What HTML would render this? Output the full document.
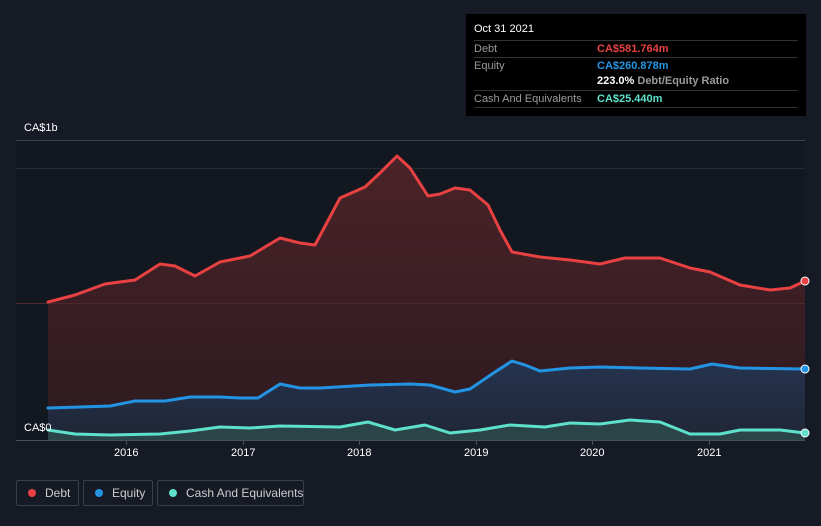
<!DOCTYPE html><html><head><style>
body{margin:0;width:821px;height:526px;background:#151a24;font-family:"Liberation Sans",sans-serif;overflow:hidden;position:relative}
.t{position:absolute;color:#fff;font-size:11px}
.tip{position:absolute;left:466px;top:14px;width:340px;height:102px;background:#000}
.row{position:absolute;left:8px;width:324px;border-top:1px solid #333;font-size:11px;color:#9a9a9a;height:17px;line-height:17px}
.row span{position:absolute;left:123px;font-weight:bold;white-space:nowrap}
.leg{position:absolute;top:480px;height:26px;border:1px solid #3a3f4a;border-radius:2px;color:#ccc;font-size:12px;line-height:24px;box-sizing:border-box;white-space:nowrap}
.leg i{position:absolute;left:11px;top:8px;width:8px;height:8px;border-radius:50%}
</style></head><body>
<svg width="821" height="526" style="position:absolute;left:0;top:0">
<defs>
<linearGradient id="dr" x1="0" y1="0" x2="0" y2="1"><stop offset="0" stop-color="#4a2328"/><stop offset="1" stop-color="#2c1a20"/></linearGradient>
<linearGradient id="eq" x1="0" y1="0" x2="0" y2="1"><stop offset="0" stop-color="#263450"/><stop offset="1" stop-color="#1f2535"/></linearGradient>
</defs>
<rect x="16" y="140" width="789" height="300" fill="#131820"/>
<line x1="16" y1="140.5" x2="805" y2="140.5" stroke="#3a3f48"/>
<line x1="16" y1="168.5" x2="805" y2="168.5" stroke="#262b34"/>
<polygon fill="url(#dr)" points="48,302 75,295 105,284 135,280 160,264 175,266 195,276 220,262 250,256 280,238 300,243 315,245 340,198 365,187 380,173 397,156 410,168 428,196 440,194 455,188 470,190 488,205 500,230 512,252 540,257 570,260 600,264 625,258 660,258 690,268 710,272 740,285 770,290 790,288 805,281 805,440 48,440"/>
<line x1="16" y1="303.5" x2="805" y2="303.5" stroke="#4a2a2f"/>
<polygon fill="url(#eq)" points="48,408 80,407 110,406 135,401 165,401 190,397 220,397 240,398 258,398 280,384 300,388 320,388 370,385 410,384 430,385 455,392 470,389 495,372 512,361 525,365 540,371 570,368 600,367 640,368 690,369 712,364 740,368 805,369 805,440 48,440"/>
<polygon fill="#2b4448" points="48,430 75,434 110,435 160,434 190,431 220,427 250,428 280,426 340,427 368,422 395,430 425,425 450,433 480,430 510,425 545,427 570,423 600,424 630,420 660,422 690,434 720,434 740,430 780,430 805,433 805,440 48,440"/>
<g fill="none" stroke-width="3" stroke-linejoin="round" stroke-linecap="round">
<polyline stroke="#e84142" points="48,302 75,295 105,284 135,280 160,264 175,266 195,276 220,262 250,256 280,238 300,243 315,245 340,198 365,187 380,173 397,156 410,168 428,196 440,194 455,188 470,190 488,205 500,230 512,252 540,257 570,260 600,264 625,258 660,258 690,268 710,272 740,285 770,290 790,288 805,281"/>
<polyline stroke="#2394e3" points="48,408 80,407 110,406 135,401 165,401 190,397 220,397 240,398 258,398 280,384 300,388 320,388 370,385 410,384 430,385 455,392 470,389 495,372 512,361 525,365 540,371 570,368 600,367 640,368 690,369 712,364 740,368 805,369"/>
<polyline stroke="#5de0cc" points="48,430 75,434 110,435 160,434 190,431 220,427 250,428 280,426 340,427 368,422 395,430 425,425 450,433 480,430 510,425 545,427 570,423 600,424 630,420 660,422 690,434 720,434 740,430 780,430 805,433"/>
</g>
<circle cx="805" cy="281" r="4" fill="#e84142" stroke="#fff"/>
<circle cx="805" cy="369" r="4" fill="#2394e3" stroke="#fff"/>
<circle cx="805" cy="433" r="4" fill="#5de0cc" stroke="#fff"/>
<line x1="16" y1="440.5" x2="805" y2="440.5" stroke="#4a4f58"/>
<g stroke="#4a4f58"><line x1="126.5" y1="441" x2="126.5" y2="445"/><line x1="243.5" y1="441" x2="243.5" y2="445"/><line x1="359.5" y1="441" x2="359.5" y2="445"/><line x1="476.5" y1="441" x2="476.5" y2="445"/><line x1="592.5" y1="441" x2="592.5" y2="445"/><line x1="709.5" y1="441" x2="709.5" y2="445"/></g>
</svg>
<div class="t" style="left:24px;top:122px">CA$1b</div>
<div class="t" style="left:24px;top:422px">CA$0</div>
<div class="t" style="left:114px;top:447px">2016</div>
<div class="t" style="left:231px;top:447px">2017</div>
<div class="t" style="left:347px;top:447px">2018</div>
<div class="t" style="left:464px;top:447px">2019</div>
<div class="t" style="left:580px;top:447px">2020</div>
<div class="t" style="left:697px;top:447px">2021</div>
<div class="tip">
<div style="position:absolute;left:8px;top:9px;color:#fff;font-size:11px">Oct 31 2021</div>
<div class="row" style="top:26px">Debt<span style="color:#e84142">CA$581.764m</span></div>
<div class="row" style="top:43px">Equity<span style="color:#2394e3">CA$260.878m</span></div>
<div class="row" style="top:59px;border:0"><span style="color:#fff">223.0% <b style="color:#9a9a9a">Debt/Equity Ratio</b></span></div>
<div class="row" style="top:76px">Cash And Equivalents<span style="color:#5de0cc">CA$25.440m</span></div>
<div class="row" style="top:93px"></div>
</div>
<div class="leg" style="left:16px;width:63px"><i style="background:#e84142"></i><span style="position:absolute;left:28px">Debt</span></div>
<div class="leg" style="left:83px;width:70px"><i style="background:#2394e3"></i><span style="position:absolute;left:28px">Equity</span></div>
<div class="leg" style="left:157px;width:147px"><i style="background:#5de0cc"></i><span style="position:absolute;left:28px">Cash And Equivalents</span></div>
</body></html>
